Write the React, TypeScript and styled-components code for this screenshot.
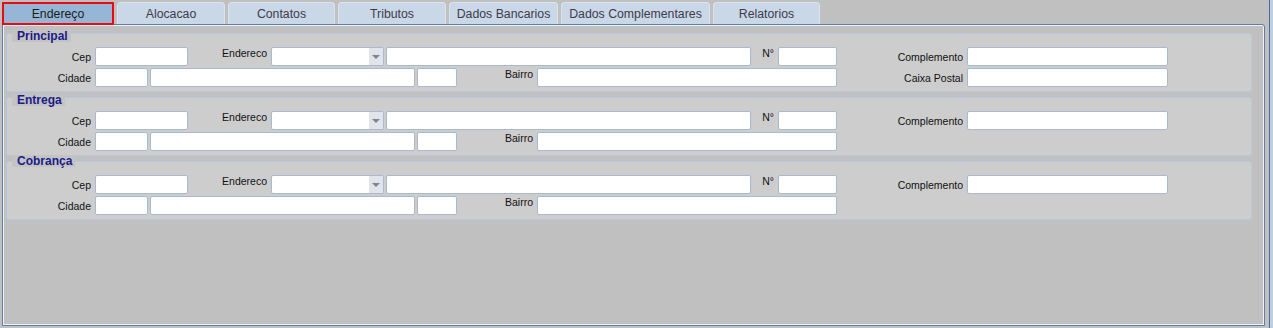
import React from "react";
import styled, { createGlobalStyle } from "styled-components";

const GlobalStyle = createGlobalStyle`
    html, body {
        margin: 0;
        padding: 0;
        background: #bcd0e2;
        font-family: "Liberation Sans", Arial, sans-serif;
    }
`;

const Frame = styled.div`
    width: 1270px;
    height: 328px;
    background: #c0c0c0;
    border-right: 1px solid #4f6a94;
    box-sizing: border-box;
    padding-top: 2px;
`;

const TabBar = styled.div`
    display: flex;
    gap: 3px;
    padding-left: 2px;
    height: 22px;
`;

const Tab = styled.div<{ $active?: boolean; $width: number }>`
    width: ${(p) => p.$width}px;
    height: ${(p) => (p.$active ? 23 : 22)}px;
    box-sizing: border-box;
    display: flex;
    align-items: center;
    justify-content: center;
    font-size: 12.3px;
    color: ${(p) => (p.$active ? "#1c1c1c" : "#3c3c4c")};
    background: ${(p) => (p.$active ? "#96b6d6" : "#c9d7e7")};
    border: ${(p) => (p.$active ? "2px solid #ea0a14" : "1px solid #dae4ef")};
    border-bottom: ${(p) => (p.$active ? "2px solid #ea0a14" : "none")};
    border-radius: ${(p) => (p.$active ? "0" : "4px 4px 0 0")};
    position: relative;
    z-index: ${(p) => (p.$active ? 2 : 0)};
    padding-top: 1px;
`;

const Panel = styled.div`
    margin-left: 2px;
    width: 1263px;
    height: 302px;
    box-sizing: border-box;
    border: 1px solid #5f7ea6;
    border-radius: 0 3px 0 0;
    box-shadow: inset 0 0 0 1px #eef3f9;
    padding: 8px 12px 0 3px;
    display: flex;
    flex-direction: column;
    gap: 5px;
`;

const Section = styled.div`
    background: #cdcdcd;
    border: 1px solid #b9c9dc;
    border-radius: 3px;
    padding-bottom: 2px;
`;

const SectionTitle = styled.div<{ $lift?: number }>`
    width: fit-content;
    margin: ${(p) => -4 - (p.$lift ?? 0)}px 0 ${(p) => 5 + (p.$lift ?? 0)}px 5px;
    padding: 0 3px 0 5px;
    height: 12px;
    line-height: 12px;
    background: #c3c3c3;
    color: #1b1b8a;
    font-weight: bold;
    font-size: 12px;
`;

const Row = styled.div`
    display: flex;
    align-items: center;
    height: 19px;
    margin-bottom: 2px;
`;

const Label = styled.div<{ $width: number; $high?: boolean }>`
    width: ${(p) => p.$width}px;
    box-sizing: border-box;
    padding-right: 4px;
    text-align: right;
    font-size: 10.5px;
    color: #111;
    white-space: nowrap;
    align-self: ${(p) => (p.$high ? "flex-start" : "center")};
    margin-top: ${(p) => (p.$high ? "0" : "1px")};
`;

const Input = styled.div<{ $width: number; $gap?: number }>`
    width: ${(p) => p.$width}px;
    height: 19px;
    margin-left: ${(p) => p.$gap ?? 0}px;
    box-sizing: border-box;
    background: #ffffff;
    border: 1px solid #aabace;
    border-radius: 2px;
`;

const Select = styled(Input)`
    display: flex;
    justify-content: flex-end;
`;

const Arrow = styled.div`
    width: 14px;
    height: 17px;
    background: #e1e4ea;
    display: flex;
    align-items: center;
    justify-content: center;
    &::after {
        content: "";
        border-left: 4px solid transparent;
        border-right: 4px solid transparent;
        border-top: 4px solid #7b8492;
    }
`;

const tabs = [
    { name: "Endereço", width: 112 },
    { name: "Alocacao", width: 108 },
    { name: "Contatos", width: 107 },
    { name: "Tributos", width: 108 },
    { name: "Dados Bancarios", width: 109 },
    { name: "Dados Complementares", width: 149 },
    { name: "Relatorios", width: 107 },
];

const AddressBlock = ({ title, extra, lift }: { title: string; extra: boolean; lift?: number }) => (
    <Section>
        <SectionTitle $lift={lift}>{title}</SectionTitle>
        <Row>
            <Label $width={88}>Cep</Label>
            <Input $width={93} />
            <Label $width={83} $high>
                Endereco
            </Label>
            <Select $width={113}>
                <Arrow />
            </Select>
            <Input $width={365} $gap={2} />
            <Label $width={27} $high>
                N°
            </Label>
            <Input $width={59} />
            <Label $width={130}>Complemento</Label>
            <Input $width={201} />
        </Row>
        <Row>
            <Label $width={88}>Cidade</Label>
            <Input $width={53} />
            <Input $width={265} $gap={2} />
            <Input $width={40} $gap={2} />
            <Label $width={80} $high>
                Bairro
            </Label>
            <Input $width={300} />
            {extra && (
                <>
                    <Label $width={130}>Caixa Postal</Label>
                    <Input $width={201} />
                </>
            )}
        </Row>
    </Section>
);

const App = () => {
    return (
        <Frame>
            <GlobalStyle />
            <TabBar>
                {tabs.map((t, i) => (
                    <Tab key={t.name} $width={t.width} $active={i === 0}>
                        {t.name}
                    </Tab>
                ))}
            </TabBar>
            <Panel>
                <AddressBlock title="Principal" extra />
                <AddressBlock title="Entrega" extra={false} />
                <AddressBlock title="Cobrança" extra={false} lift={3} />
            </Panel>
        </Frame>
    );
};

export default App;
